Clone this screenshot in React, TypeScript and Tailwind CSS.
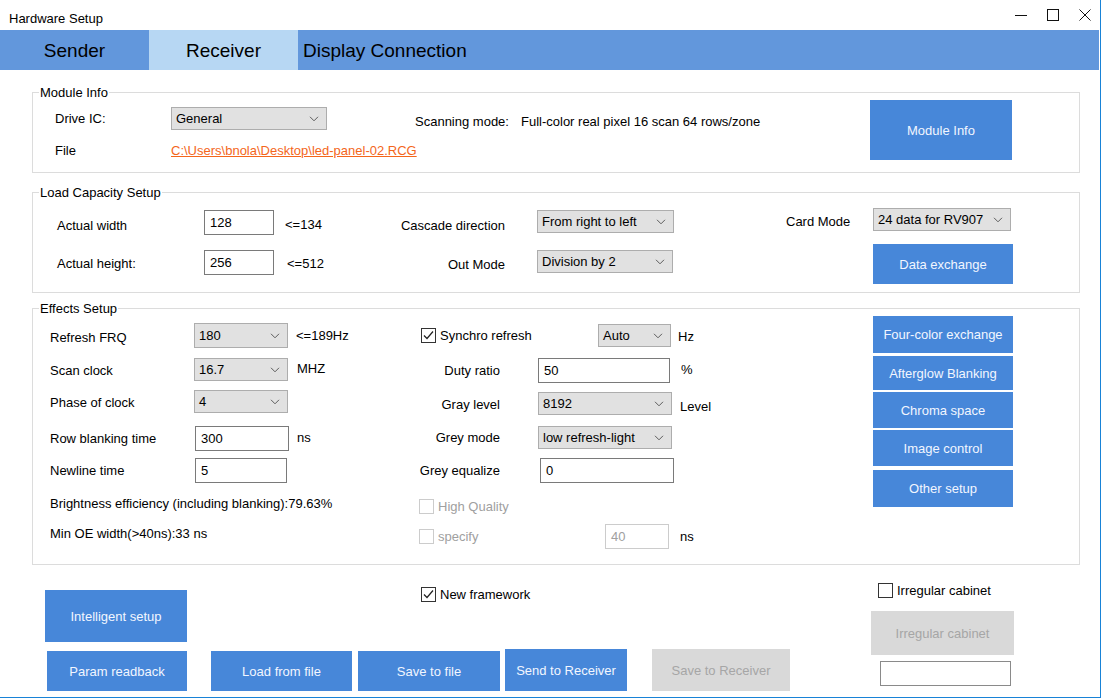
import React from 'react';

const BTN = 'flex items-center justify-center bg-[#4787d9] text-[#f2f6ff] shrink-0';
const OFF = 'flex items-center justify-center bg-[#d9d9d9] text-[#a6a6a6] shrink-0';

const Chevron = () => (
  <svg width="10" height="6" viewBox="0 0 10 6" className="shrink-0">
    <polyline points="1,0.8 5,4.8 9,0.8" fill="none" stroke="#5c5c5c" strokeWidth="1" />
  </svg>
);

const Select = ({ value, className }: { value: string; className: string }) => (
  <div className={`flex items-center justify-between bg-[#e1e1e1] border border-[#adadad] pl-[4px] pr-[7px] shrink-0 ${className}`}>
    <span>{value}</span>
    <Chevron />
  </div>
);

const TextBox = ({ value, className, disabled }: { value: string; className: string; disabled?: boolean }) => (
  <div
    className={`flex items-center bg-white border pl-[5px] shrink-0 ${
      disabled ? 'border-[#cccccc] text-[#a0a0a0]' : 'border-[#7a7a7a]'
    } ${className}`}
  >
    {value}
  </div>
);

const Check = ({ checked, disabled }: { checked?: boolean; disabled?: boolean }) => (
  <div
    className={`w-[15px] h-[15px] border bg-white flex items-center justify-center shrink-0 ${
      disabled ? 'border-[#cccccc]' : 'border-[#333333]'
    }`}
  >
    {checked && (
      <svg width="13" height="13" viewBox="0 0 13 13">
        <polyline points="2,6.5 5,9.5 11,2.5" fill="none" stroke="#222" strokeWidth="1.2" />
      </svg>
    )}
  </div>
);

const Group = ({ title, className, children }: { title: string; className: string; children: React.ReactNode }) => (
  <fieldset className={`border border-[#dcdcdc] ml-[32px] w-[1048px] ${className}`}>
    <legend className="ml-[6px] px-[1px] leading-[15px]">{title}</legend>
    {children}
  </fieldset>
);

export default function App() {
  return (
    <div className="w-[1101px] h-[698px] bg-white border-r border-b border-[#1883d7] text-[13px] leading-[15px] text-black font-['Liberation_Sans',Arial,sans-serif] flex flex-col overflow-hidden">
      {/* title bar */}
      <div className="h-[30px] flex items-start justify-between shrink-0">
        <div className="pl-[9px] pt-[11px]">Hardware Setup</div>
        <div className="flex gap-[20px] pt-[9px] pr-[9px]">
          <svg width="12" height="12" viewBox="0 0 12 12">
            <line x1="0" y1="6.5" x2="12" y2="6.5" stroke="#111" strokeWidth="1" />
          </svg>
          <svg width="12" height="12" viewBox="0 0 12 12">
            <rect x="0.5" y="0.5" width="11" height="11" fill="none" stroke="#111" strokeWidth="1" />
          </svg>
          <svg width="12" height="12" viewBox="0 0 12 12">
            <path d="M0.5 0.5 L11.5 11.5 M11.5 0.5 L0.5 11.5" stroke="#111" strokeWidth="1" />
          </svg>
        </div>
      </div>

      {/* tabs */}
      <div className="h-[40px] bg-[#6297dc] flex text-[19px] leading-[22px] shrink-0 mr-[1px]">
        <div className="w-[149px] flex items-center justify-center pt-[1px]">Sender</div>
        <div className="w-[149px] flex items-center justify-center bg-[#b7d7f3] pt-[1px]">Receiver</div>
        <div className="flex items-center pl-[5px] pt-[1px]">Display Connection</div>
      </div>

      {/* module info */}
      <Group title="Module Info" className="mt-[15px] h-[88px] shrink-0">
        <div className="flex pl-[22px] pr-[67px]">
          <div className="flex flex-col w-[272px] shrink-0">
            <div className="flex items-center h-[23px] mt-[7px]">
              <span className="w-[116px]">Drive IC:</span>
              <Select value="General" className="w-[156px] h-[23px]" />
            </div>
            <div className="flex items-center h-[20px] mt-[10px] whitespace-nowrap">
              <span className="w-[116px] shrink-0">File</span>
              <span className="text-[#f4661b] underline">C:\Users\bnola\Desktop\led-panel-02.RCG</span>
            </div>
          </div>
          <div className="flex items-center h-[23px] mt-[10px] ml-[88px]">
            <span className="w-[106px]">Scanning mode:</span>
            <span>Full-color real pixel 16 scan 64 rows/zone</span>
          </div>
          <div className={`${BTN} ml-auto w-[142px] h-[60px]`}>Module Info</div>
        </div>
      </Group>

      {/* load capacity */}
      <Group title="Load Capacity Setup" className="mt-[12px] h-[108px] shrink-0">
        <div className="flex pl-[24px]">
          <div className="flex flex-col w-[337px] shrink-0">
            <div className="flex items-center h-[25px] mt-[10px]">
              <span className="w-[147px] mt-[6px]">Actual width</span>
              <TextBox value="128" className="w-[70px] h-[25px]" />
              <span className="ml-[11px] mt-[4px]">&lt;=134</span>
            </div>
            <div className="flex items-center h-[25px] mt-[15px]">
              <span className="w-[147px] mt-[2px]">Actual height:</span>
              <TextBox value="256" className="w-[70px] h-[25px]" />
              <span className="ml-[13px] mt-[2px]">&lt;=512</span>
            </div>
          </div>
          <div className="flex flex-col shrink-0">
            <div className="flex items-center h-[23px] mt-[10px]">
              <span className="w-[111px] text-right mt-[8px]">Cascade direction</span>
              <Select value="From right to left" className="ml-[32px] w-[137px] h-[23px]" />
            </div>
            <div className="flex items-center h-[23px] mt-[17px]">
              <span className="w-[111px] text-right mt-[6px]">Out Mode</span>
              <Select value="Division by 2" className="ml-[32px] w-[136px] h-[23px]" />
            </div>
          </div>
          <div className="flex flex-col ml-[112px] shrink-0">
            <div className="flex items-center h-[23px] mt-[8px]">
              <span className="w-[87px] mt-[4px]">Card Mode</span>
              <Select value="24 data for RV907" className="w-[138px] h-[23px]" />
            </div>
            <div className={`${BTN} ml-[87px] mt-[13px] w-[140px] h-[40px]`}>Data exchange</div>
          </div>
        </div>
      </Group>

      {/* effects */}
      <Group title="Effects Setup" className="mt-[8px] h-[264px] shrink-0">
        <div className="flex pl-[17px]">
          <div className="flex flex-col w-[369px] shrink-0">
            <div className="flex items-center h-[25px] mt-[7px]">
              <span className="w-[144px] mt-[4px]">Refresh FRQ</span>
              <Select value="180" className="w-[94px] h-[25px]" />
              <span className="ml-[8px]">&lt;=189Hz</span>
            </div>
            <div className="flex items-center h-[23px] mt-[10px]">
              <span className="w-[144px] mt-[1px]">Scan clock</span>
              <Select value="16.7" className="w-[94px] h-[23px]" />
              <span className="ml-[9px] mb-[3px]">MHZ</span>
            </div>
            <div className="flex items-center h-[23px] mt-[9px]">
              <span className="w-[144px] mt-[1px]">Phase of clock</span>
              <Select value="4" className="w-[94px] h-[23px]" />
            </div>
            <div className="flex items-center h-[25px] mt-[13px]">
              <span className="w-[145px]">Row blanking time</span>
              <TextBox value="300" className="w-[94px] h-[25px]" />
              <span className="ml-[8px] mb-[3px]">ns</span>
            </div>
            <div className="flex items-center h-[25px] mt-[7px]">
              <span className="w-[145px]">Newline time</span>
              <TextBox value="5" className="w-[92px] h-[25px]" />
            </div>
            <div className="mt-[13px]">Brightness efficiency (including blanking):79.63%</div>
            <div className="mt-[15px]">Min OE width(&gt;40ns):33 ns</div>
          </div>

          <div className="flex flex-col w-[454px] shrink-0">
            <div className="flex items-center h-[23px] mt-[8px]">
              <div className="ml-[2px]">
                <Check checked />
              </div>
              <span className="ml-[4px] w-[158px]">Synchro refresh</span>
              <Select value="Auto" className="w-[73px] h-[23px]" />
              <span className="ml-[7px] mt-[2px]">Hz</span>
            </div>
            <div className="flex items-center h-[25px] mt-[11px]">
              <span className="w-[81px] text-right">Duty ratio</span>
              <TextBox value="50" className="ml-[38px] w-[132px] h-[25px]" />
              <span className="ml-[11px] mb-[3px]">%</span>
            </div>
            <div className="flex items-center h-[23px] mt-[9px]">
              <span className="w-[81px] text-right mt-[1px]">Gray level</span>
              <Select value="8192" className="ml-[38px] w-[134px] h-[23px]" />
              <span className="ml-[8px] mt-[5px]">Level</span>
            </div>
            <div className="flex items-center h-[23px] mt-[11px]">
              <span className="w-[81px] text-right">Grey mode</span>
              <Select value="low refresh-light" className="ml-[38px] w-[134px] h-[23px]" />
            </div>
            <div className="flex items-center h-[25px] mt-[9px]">
              <span className="w-[81px] text-right">Grey equalize</span>
              <TextBox value="0" className="ml-[40px] w-[134px] h-[25px]" />
            </div>
            <div className="flex items-center h-[15px] mt-[16px] text-[#a0a0a0]">
              <Check disabled />
              <span className="ml-[4px]">High Quality</span>
            </div>
            <div className="flex items-center h-[25px] mt-[10px]">
              <Check disabled />
              <span className="ml-[4px] w-[167px] text-[#a0a0a0]">specify</span>
              <TextBox value="40" disabled className="w-[64px] h-[25px]" />
              <span className="ml-[11px]">ns</span>
            </div>
          </div>

          <div className="flex flex-col w-[140px] shrink-0">
            <div className={`${BTN} h-[37px]`}>Four-color exchange</div>
            <div className={`${BTN} h-[34px] mt-[3px]`}>Afterglow Blanking</div>
            <div className={`${BTN} h-[36px] mt-[2px]`}>Chroma space</div>
            <div className={`${BTN} h-[36px] mt-[2px]`}>Image control</div>
            <div className={`${BTN} h-[37px] mt-[4px]`}>Other setup</div>
          </div>
        </div>
      </Group>

      {/* bottom */}
      <div className="flex flex-1">
        <div className="flex flex-col w-[871px] shrink-0">
          <div className="flex items-start">
            <div className={`${BTN} ml-[45px] mt-[25px] w-[142px] h-[52px]`}>Intelligent setup</div>
            <div className="flex items-center ml-[234px] mt-[22px]">
              <Check checked />
              <span className="ml-[4px]">New framework</span>
            </div>
          </div>
          <div className="flex items-end mt-[7px]">
            <div className={`${BTN} ml-[47px] w-[140px] h-[40px]`}>Param readback</div>
            <div className={`${BTN} ml-[24px] w-[141px] h-[40px]`}>Load from file</div>
            <div className={`${BTN} ml-[6px] w-[142px] h-[40px]`}>Save to file</div>
            <div className={`${BTN} ml-[5px] w-[122px] h-[42px]`}>Send to Receiver</div>
            <div className={`${OFF} ml-[25px] w-[138px] h-[42px]`}>Save to Receiver</div>
          </div>
        </div>
        <div className="flex flex-col">
          <div className="flex items-center ml-[7px] mt-[18px]">
            <Check />
            <span className="ml-[4px]">Irregular cabinet</span>
          </div>
          <div className={`${OFF} mt-[13px] w-[143px] h-[44px]`}>Irregular cabinet</div>
          <TextBox value="" className="ml-[9px] mt-[6px] w-[131px] h-[25px] !border-[#8a8a8a]" />
        </div>
      </div>
    </div>
  );
}
